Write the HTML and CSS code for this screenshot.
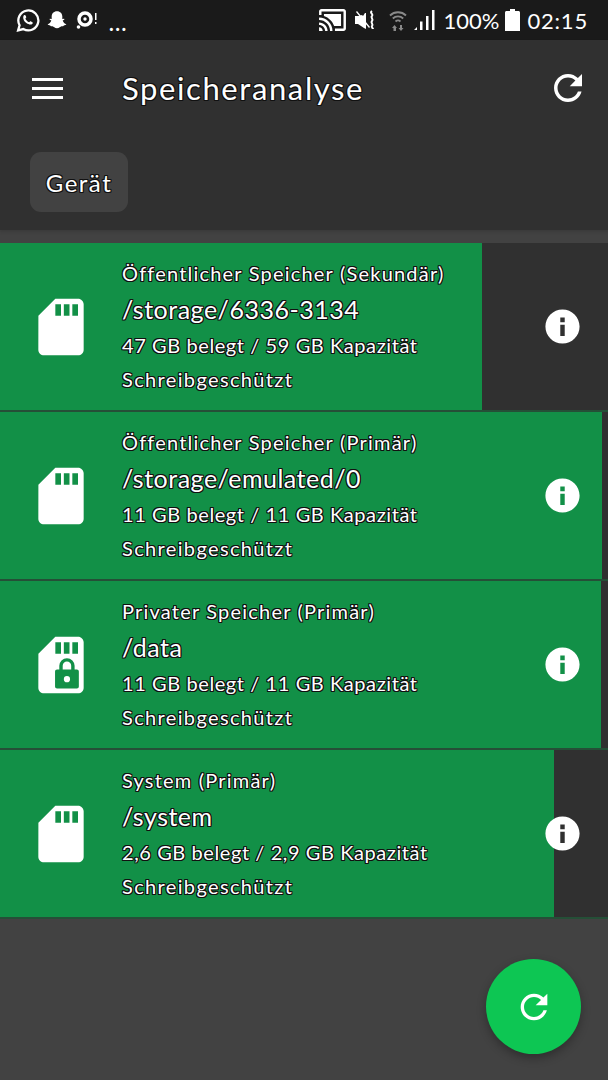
FILE: index.html
```html
<!DOCTYPE html>
<html lang="de">
<head>
<meta charset="utf-8">
<title>Speicheranalyse</title>
<link rel="stylesheet" href="styles.css">
</head>
<body>
<div class="status">
  <div class="status-left">
    <svg class="ic-wa" viewBox="0 0 24 24"><path class="wa-ring" d="M3 21.500l1.400-5A9.600 9.600 0 1 1 8 20.200z"/><path class="wa-ph" d="M8.600 7c.9-.7 1.300-.4 1.700.5l.5 1.200c.2.500-.6 1.200-.8 1.600.6 1.500 2 2.800 3.500 3.400.5-.3 1.100-1.100 1.600-.9l1.500.8c.7.4.6 1-.1 1.700-1 1-3.200.8-5.600-.8C8.500 13 6.900 9 8.600 7z"/></svg>
    <svg class="ic-snap" viewBox="0 0 24 24"><path d="M12 2.500c3.600 0 5.800 2.500 5.800 5.800v2.600l1.900-.4c.8.300.6 1.100-1.500 2 .6 2.200 2.300 3.600 4 4.200-.3 1-1.700 1-2.800 1.300-.4 1.100-1 .8-2.500.9-1.300.2-2.400 2.100-4.900 2.100s-3.600-1.900-4.900-2.100c-1.500-.1-2.100.2-2.500-.9-1.100-.3-2.500-.3-2.800-1.300 1.700-.6 3.400-2 4-4.200-2.100-.9-2.300-1.700-1.500-2l1.900.4V8.300c0-3.300 2.200-5.800 5.800-5.800z"/></svg>
    <svg class="ic-disc" viewBox="0 0 22 20"><circle class="disc" cx="9" cy="9" r="6"/><circle cx="9" cy="9" r="1.700"/><circle cx="2.500" cy="17" r="1.800"/><path d="M19 3h1.500v7H19zM19 12h1.500v2H19z"/></svg>
    <span class="dots">...</span>
  </div>
  <div class="status-right">
    <svg class="ic-cast" viewBox="1 3 22 18"><path d="M19 7H5v1.630c3.960 1.280 7.090 4.410 8.370 8.370H19V7zM1 18v3h3c0-1.660-1.340-3-3-3zm0-4v2c2.760 0 5 2.240 5 5h2c0-3.870-3.130-7-7-7zm0-4v2c4.970 0 9 4.030 9 9h2c0-6.080-4.930-11-11-11zm20-7H3c-1.100 0-2 .9-2 2v3h2V5h18v14h-7v2h7c1.100 0 2-.9 2-2V5c0-1.100-.9-2-2-2z"/></svg>
    <svg class="ic-mute" viewBox="0 0 22 22"><path d="M0 7h4l3-1 1 1 2-3 1 0v16l-2-1-6-4H0z"/><path d="M1 3l1-1 13 16-1 1z"/><path class="mute-wave" d="M17 2c-3 2 2 3 0 5-2 1.500 2 3 0 5s2 3 0 5c-1 1 1 2 1 3"/></svg>
    <svg class="ic-wifi" viewBox="0 0 18 22"><path class="wifi-arc" d="M1 6.500a11.500 11.500 0 0 1 16 0M3.800 9.500a7.500 7.500 0 0 1 10.400 0M6.500 12.500a3.800 3.800 0 0 1 5 0"/><path d="M4.500 22v-3h-1.500l2.500-3 2.500 3H7v3zM11 16v3H9.500l2.500 3 2.500-3H13v-3z"/></svg>
    <svg class="ic-signal" viewBox="0 0 21 22"><path d="M0 21l3-3v3zM6 21V12.500h2.500V21zM12 21V7h2.500v14zM18 21V1h2.500v20z"/></svg>
    <span class="pct">100%</span>
    <svg class="ic-batt" viewBox="0 0 15 22"><path d="M5 0h5v2h3.500c.8 0 1.500.7 1.500 1.500V22H0V3.500C0 2.700.7 2 1.500 2H5z"/></svg>
    <span class="clock">02:15</span>
  </div>
</div>

<header class="appbar">
  <div class="toolbar">
    <div class="burger"><span></span><span></span><span></span></div>
    <h1 class="title">Speicheranalyse</h1>
    <svg class="ic-refresh" viewBox="0 0 24 24"><path d="M17.650 6.350C16.200 4.900 14.210 4 12 4c-4.420 0-7.990 3.580-7.990 8s3.570 8 7.990 8c3.730 0 6.840-2.550 7.730-6h-2.080c-.82 2.330-3.040 4-5.650 4-3.310 0-6-2.690-6-6s2.690-6 6-6c1.660 0 3.140.69 4.220 1.780L13 11h7V4l-2.350 2.350z"/></svg>
  </div>
  <div class="chip">Gerät</div>
</header>

<main class="list">
  <section class="row">
    <div class="fill" style="width:482px"></div>
    <div class="icon-col"><svg class="ic-sd" viewBox="0 0 24 24"><path d="M18 2h-8L4.020 8 4 20c0 1.100.9 2 2 2h12c1.100 0 2-.9 2-2V4c0-1.100-.9-2-2-2zm-6 6h-2V4h2v4zm3 0h-2V4h2v4zm3 0h-2V4h2v4z"/></svg></div>
    <div class="text">
      <div class="l1">Öffentlicher Speicher (Sekundär)</div>
      <div class="l2">/storage/6336-3134</div>
      <div class="l3">47 GB belegt / 59 GB Kapazität</div>
      <div class="l4">Schreibgeschützt</div>
    </div>
    <svg class="ic-info" viewBox="0 0 24 24"><path d="M12 2C6.480 2 2 6.480 2 12s4.480 10 10 10 10-4.480 10-10S17.520 2 12 2zm1.300 15.500h-2.600V11h2.600v6.500zm0-8h-2.600V6.800h2.600v2.700z"/></svg>
  </section>
  <section class="row">
    <div class="fill" style="width:602px"></div>
    <div class="icon-col"><svg class="ic-sd" viewBox="0 0 24 24"><path d="M18 2h-8L4.020 8 4 20c0 1.100.9 2 2 2h12c1.100 0 2-.9 2-2V4c0-1.100-.9-2-2-2zm-6 6h-2V4h2v4zm3 0h-2V4h2v4zm3 0h-2V4h2v4z"/></svg></div>
    <div class="text">
      <div class="l1">Öffentlicher Speicher (Primär)</div>
      <div class="l2">/storage/emulated/0</div>
      <div class="l3">11 GB belegt / 11 GB Kapazität</div>
      <div class="l4">Schreibgeschützt</div>
    </div>
    <svg class="ic-info" viewBox="0 0 24 24"><path d="M12 2C6.480 2 2 6.480 2 12s4.480 10 10 10 10-4.480 10-10S17.520 2 12 2zm1.300 15.500h-2.600V11h2.600v6.500zm0-8h-2.600V6.800h2.600v2.700z"/></svg>
  </section>
  <section class="row">
    <div class="fill" style="width:601px"></div>
    <div class="icon-col"><svg class="ic-sd" viewBox="0 0 24 24"><path d="M18 2h-8L4.020 8 4 20c0 1.100.9 2 2 2h12c1.100 0 2-.9 2-2V4c0-1.100-.9-2-2-2zm-6 6h-2V4h2v4zm3 0h-2V4h2v4zm3 0h-2V4h2v4z"/><path class="lock" fill-rule="evenodd" d="M11.400 13.600v-1.300a2.700 2.700 0 0 1 5.400 0v1.300h.8c.4 0 .7.3.7.7v5.300c0 .4-.3.7-.7.7h-7c-.4 0-.7-.3-.7-.7v-5.300c0-.4.3-.7.7-.7zm1.200 0h3v-1.300a1.500 1.500 0 0 0-3 0zm1.500 2.300a1.100 1.100 0 1 0 0 2.200 1.100 1.100 0 0 0 0-2.200z"/></svg></div>
    <div class="text">
      <div class="l1">Privater Speicher (Primär)</div>
      <div class="l2">/data</div>
      <div class="l3">11 GB belegt / 11 GB Kapazität</div>
      <div class="l4">Schreibgeschützt</div>
    </div>
    <svg class="ic-info" viewBox="0 0 24 24"><path d="M12 2C6.480 2 2 6.480 2 12s4.480 10 10 10 10-4.480 10-10S17.520 2 12 2zm1.300 15.500h-2.600V11h2.600v6.500zm0-8h-2.600V6.800h2.600v2.700z"/></svg>
  </section>
  <section class="row">
    <div class="fill" style="width:554px"></div>
    <div class="icon-col"><svg class="ic-sd" viewBox="0 0 24 24"><path d="M18 2h-8L4.020 8 4 20c0 1.100.9 2 2 2h12c1.100 0 2-.9 2-2V4c0-1.100-.9-2-2-2zm-6 6h-2V4h2v4zm3 0h-2V4h2v4zm3 0h-2V4h2v4z"/></svg></div>
    <div class="text">
      <div class="l1">System (Primär)</div>
      <div class="l2">/system</div>
      <div class="l3">2,6 GB belegt / 2,9 GB Kapazität</div>
      <div class="l4">Schreibgeschützt</div>
    </div>
    <svg class="ic-info" viewBox="0 0 24 24"><path d="M12 2C6.480 2 2 6.480 2 12s4.480 10 10 10 10-4.480 10-10S17.520 2 12 2zm1.300 15.500h-2.600V11h2.600v6.500zm0-8h-2.600V6.800h2.600v2.700z"/></svg>
  </section>
</main>

<button class="fab" type="button" aria-label="Aktualisieren">
  <svg class="ic-fab" viewBox="0 0 24 24"><path d="M17.650 6.350C16.200 4.900 14.210 4 12 4c-4.420 0-7.990 3.580-7.990 8s3.570 8 7.990 8c3.730 0 6.840-2.550 7.730-6h-2.080c-.82 2.330-3.040 4-5.650 4-3.310 0-6-2.690-6-6s2.690-6 6-6c1.660 0 3.140.69 4.220 1.780L13 11h7V4l-2.350 2.350z"/></svg>
</button>
</body>
</html>
```
FILE: styles.css
```css
* { box-sizing: border-box; }
html, body { margin: 0; height: 100%; }
body {
  width: 608px;
  height: 1080px;
  position: relative;
  overflow: hidden;
  background: #424242;
  color: #fff;
  font-family: "Lato", "Open Sans", sans-serif;
  --outline: 1px 0 0 #111, -1px 0 0 #111, 0 1px 0 #111, 0 -1px 0 #111, 1px 1px 0 #111, -1px -1px 0 #111, 1px -1px 0 #111, -1px 1px 0 #111;
}
svg { display: block; fill: #fff; flex: none; }

.status {
  height: 40px;
  background: #1a1a1a;
  display: flex;
  justify-content: space-between;
  align-items: center;
  padding: 0 20px 0 15px;
}
.status-left, .status-right { display: flex; align-items: center; }
.ic-wa { width: 25px; height: 25px; margin-right: 6px; }
.wa-ring { fill: none; stroke: #fff; stroke-width: 2.200; }
.ic-snap { width: 22px; height: 22px; margin-right: 8px; }
.ic-disc { width: 22px; height: 20px; margin-right: 11px; }
.disc { fill: none; stroke: #fff; stroke-width: 3.500; }
.dots { font-size: 20px; font-weight: 700; letter-spacing: 1.500px; line-height: 1; position: relative; top: 3px; }
.ic-cast { width: 27px; height: 22px; margin-right: 9px; }
.ic-mute { width: 22px; height: 22px; margin-right: 12px; }
.mute-wave { fill: none; stroke: #fff; stroke-width: 2; }
.ic-wifi { width: 18px; height: 22px; margin-right: 7px; fill: #8a8a8a; }
.wifi-arc { fill: none; stroke: #8a8a8a; stroke-width: 1.800; }
.ic-signal { width: 21px; height: 22px; margin-right: 8px; }
.pct { font-size: 22px; width: 55px; letter-spacing: 0; margin-right: 7px; white-space: nowrap; }
.ic-batt { width: 15px; height: 22px; margin-right: 7px; }
.clock { font-size: 22px; letter-spacing: .8px; white-space: nowrap; }

.appbar {
  height: 190px;
  background: #303030;
  padding: 0 0 18px 30px;
  box-shadow: 0 2px 3px rgba(0,0,0,.12);
}
.toolbar { height: 96px; display: flex; align-items: center; padding-right: 19px; }
.burger { width: 31px; margin-left: 2px; margin-right: 59px; display: flex; flex-direction: column; gap: 6px; }
.burger span { display: block; height: 3px; background: #fff; }
.title {
  flex: 1;
  margin: 0;
  font-size: 31px;
  font-weight: 400;
  letter-spacing: 1.600px;
  text-shadow: var(--outline);
}
.ic-refresh { width: 42px; height: 42px; }
.chip {
  margin-top: 16px;
  width: 98px;
  height: 60px;
  border-radius: 11px;
  background: #424242;
  display: flex;
  align-items: center;
  justify-content: center;
  font-size: 24px;
  letter-spacing: 1.500px;
  text-shadow: var(--outline);
}

.list { margin-top: 13px; }
.row {
  height: 169px;
  position: relative;
  display: flex;
  align-items: center;
  background: #303030;
  border-bottom: 2px solid #254f37;
}
.fill { position: absolute; left: 0; top: 0; bottom: 0; background: #129047; }
.icon-col { position: relative; width: 122px; flex: none; display: flex; justify-content: center; }
.ic-sd { width: 68px; height: 68px; }
.lock { fill: #129047; }
.text { position: relative; flex: 1; text-shadow: var(--outline); white-space: nowrap; padding-bottom: 1px; }
.l1 { height: 34px; line-height: 34px; font-size: 20px; letter-spacing: 1.200px; }
.l2 { height: 38px; line-height: 38px; font-size: 25px; letter-spacing: .5px; }
.l3 { height: 34px; line-height: 34px; font-size: 20px; letter-spacing: .58px; }
.l4 { height: 34px; line-height: 34px; font-size: 20px; letter-spacing: 1.350px; }
.ic-info { position: relative; width: 41px; height: 41px; margin-right: 25px; }

.fab {
  position: absolute;
  left: 486px;
  top: 959px;
  width: 95px;
  height: 95px;
  border: 0;
  border-radius: 50%;
  padding: 0;
  background: #0dc653;
  box-shadow: 0 4px 10px rgba(0,0,0,.3);
  display: flex;
  align-items: center;
  justify-content: center;
}
.ic-fab { width: 40px; height: 40px; }
```
